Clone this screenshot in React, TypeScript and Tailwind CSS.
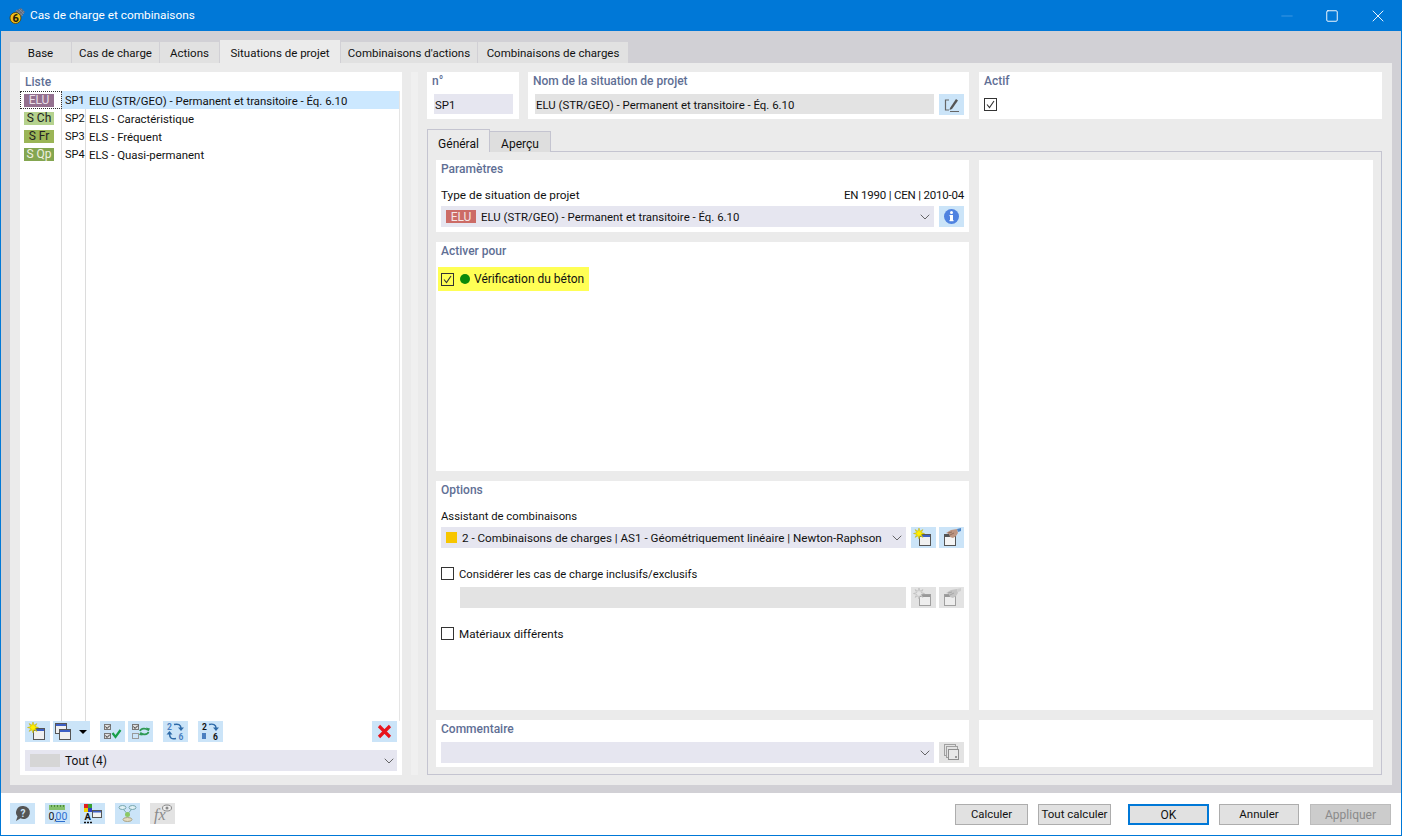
import React from 'react';
import { ChevronDown, Minus, Square, X } from 'lucide-react';

const font = { fontFamily: 'Roboto, "Noto Sans", sans-serif' };

const tabs = [
  { label: 'Base', w: 'w-[61px]' },
  { label: 'Cas de charge', w: 'w-[87px]' },
  { label: 'Actions', w: 'w-[59px]' },
  { label: 'Situations de projet', w: 'w-[120px]', active: true },
  { label: "Combinaisons d'actions", w: 'w-[136px]' },
  { label: 'Combinaisons de charges', w: 'w-[150px]' },
];

const rows = [
  { badge: 'ELU', color: 'bg-[#94708f] text-[#e8dfe8]', id: 'SP1', name: 'ELU (STR/GEO) - Permanent et transitoire - Éq. 6.10', selected: true },
  { badge: 'S Ch', color: 'bg-[#b5d28e] text-[#222]', id: 'SP2', name: 'ELS - Caractéristique' },
  { badge: 'S Fr', color: 'bg-[#9bb556] text-[#222]', id: 'SP3', name: 'ELS - Fréquent' },
  { badge: 'S Qp', color: 'bg-[#84a650] text-[#f0f0e0]', id: 'SP4', name: 'ELS - Quasi-permanent' },
];

const Star = ({ cx, cy, fill, stroke }: { cx: number; cy: number; fill: string; stroke: string }) => {
  const pts: string[] = [];
  for (let i = 0; i < 16; i++) {
    const r = i % 2 === 0 ? 5.5 : 2.4;
    const a = (Math.PI * 2 * i) / 16 - Math.PI / 2;
    pts.push(`${cx + r * Math.cos(a)},${cy + r * Math.sin(a)}`);
  }
  return <polygon points={pts.join(' ')} fill={fill} stroke={stroke} strokeWidth="0.5" />;
};

const NewIcon = ({ off }: { off?: boolean }) => (
  <svg width="25" height="21" viewBox="0 0 25 21">
    <rect x="8.5" y="7.5" width="11" height="11" fill={off ? '#eee' : '#f0f0f0'} stroke={off ? '#a0a0a0' : '#555'} />
    <rect x="9" y="8" width="10" height="2" fill={off ? '#999' : '#3d5fc4'} />
    <Star cx={8} cy={6.5} fill={off ? '#e4e4e4' : '#ffee00'} stroke={off ? '#aaa' : '#b8a800'} />
  </svg>
);

const HandIcon = ({ off }: { off?: boolean }) => (
  <svg width="25" height="21" viewBox="0 0 25 21">
    <rect x="5.5" y="7.5" width="11" height="11" fill={off ? '#eee' : '#f5f5f5'} stroke={off ? '#a0a0a0' : '#555'} />
    <rect x="6" y="8" width="10" height="2" fill={off ? '#999' : '#555'} />
    <path d="M7 6l5-3 6-1 1 4-2 3-3 2-3-1-1-3z" fill={off ? '#c4c4c4' : '#bd9683'} />
    <path d="M9 6l4-1M11 8l4-2" stroke={off ? '#999' : '#7d5c4c'} strokeWidth="0.700" />
    <path d="M18 2l4-1v3l-3 1z" fill={off ? '#d0d0d0' : '#4f86c6'} />
  </svg>
);

const CopyIcon = () => (
  <svg width="18" height="21" viewBox="0 0 18 21">
    <rect x="2.500" y="2.500" width="11" height="10" fill="#f0f0f0" stroke="#555" />
    <rect x="3" y="3" width="10" height="2" fill="#3d5fc4" />
    <rect x="6.500" y="8.500" width="11" height="10" fill="#f0f0f0" stroke="#555" />
    <rect x="7" y="9" width="10" height="2" fill="#3d5fc4" />
  </svg>
);

const CheckAllIcon = () => (
  <svg width="25" height="21" viewBox="0 0 25 21">
    <rect x="4.500" y="3.500" width="6" height="5" fill="#ddd" stroke="#777" />
    <rect x="4.500" y="12.500" width="6" height="5" fill="#ddd" stroke="#777" />
    <path d="M5.500 5.500l1.500 2 3-3M5.500 14.500l1.500 2 3-3" fill="none" stroke="#333" />
    <path d="M12.500 12l3 4 5-7" fill="none" stroke="#18a04a" strokeWidth="2.200" />
  </svg>
);

const CheckSwapIcon = () => (
  <svg width="25" height="21" viewBox="0 0 25 21">
    <rect x="4.500" y="3.500" width="6" height="5" fill="#ddd" stroke="#777" />
    <rect x="4.500" y="12.500" width="6" height="5" fill="none" stroke="#999" />
    <path d="M5.500 5.500l1.500 2 3-3" fill="none" stroke="#333" />
    <path d="M12 10c1-3 6-3 8-1M20.500 11c-1 3-6 3-8 1" fill="none" stroke="#2f9a55" strokeWidth="1.800" />
    <path d="M18 6.500l4 1-1.500 3zM14.500 14.500l-3.500-.5 1.500-3z" fill="#2f9a55" />
  </svg>
);

const RenumberIcon = () => (
  <svg width="25" height="21" viewBox="0 0 25 21" style={font}>
    <text x="4" y="9" fontSize="8.500" fontWeight="700" fill="#4a7fc0">2</text>
    <text x="15.500" y="18.500" fontSize="8.500" fontWeight="700" fill="#4a7fc0">6</text>
    <path d="M11 3.500c4-1 7 0 7 4" fill="none" stroke="#2e6aa8" strokeWidth="1.500" />
    <path d="M15 6.500h6l-3 3.500z" fill="#2e6aa8" />
    <path d="M13 17.500c-4 1-6.500 0-6.500-5" fill="none" stroke="#2e6aa8" strokeWidth="1.500" />
    <path d="M3.500 13.500h6l-3-3.500z" fill="#2e6aa8" />
  </svg>
);

const ShiftIcon = () => (
  <svg width="25" height="21" viewBox="0 0 25 21" style={font}>
    <text x="4" y="9" fontSize="8.500" fontWeight="700" fill="#111">2</text>
    <text x="15" y="18.500" fontSize="8.500" fontWeight="700" fill="#111">6</text>
    <path d="M11 3.500c4-1 7 0 7 3.500" fill="none" stroke="#2e6aa8" strokeWidth="1.500" />
    <path d="M15 6.500h6l-3 3.500z" fill="#2e6aa8" />
    <rect x="4" y="12" width="4" height="6" fill="#4a7fc0" />
  </svg>
);

const DeleteIcon = () => (
  <svg width="25" height="21" viewBox="0 0 25 21">
    <path d="M7 5l11 11M18 5L7 16" stroke="#e8141c" strokeWidth="3.200" />
  </svg>
);

const EditIcon = () => (
  <svg width="25" height="21" viewBox="0 0 25 21">
    <path d="M10 6H6.500v10H10" fill="none" stroke="#666" strokeWidth="1.200" />
    <path d="M11 14l6-9 2 1.500-6 8.500-2.500 1z" fill="#555" />
    <path d="M11 17.500h9" stroke="#666" />
  </svg>
);

const InfoIcon = () => (
  <svg width="25" height="21" viewBox="0 0 25 21">
    <circle cx="12.500" cy="10.500" r="7.500" fill="#4f82e0" />
    <rect x="11" y="9" width="3" height="6" fill="#fff" />
    <rect x="10.500" y="9" width="3" height="1.200" fill="#fff" />
    <rect x="10.500" y="14" width="4" height="1.200" fill="#fff" />
    <circle cx="12.500" cy="6.500" r="1.500" fill="#fff" />
  </svg>
);

const CommentIcon = () => (
  <svg width="25" height="21" viewBox="0 0 25 21">
    <rect x="5.500" y="2.500" width="11" height="11" fill="none" stroke="#a0a0a0" />
    <rect x="7.500" y="4.500" width="11" height="11" fill="#e2e2e2" stroke="#a0a0a0" />
    <rect x="9.500" y="7.500" width="10" height="10" fill="#e8e8e8" stroke="#8f8f8f" />
    <rect x="16" y="14" width="2" height="2" fill="#999" />
  </svg>
);

const HelpIcon = () => (
  <svg width="25" height="21" viewBox="0 0 25 21" style={font}>
    <path d="M13.500 3a6.500 6.500 0 1 1-3 12.300L6 18l1.500-4.500A6.500 6.500 0 0 1 13.500 3z" fill="#555" />
    <text x="10.500" y="13.500" fontSize="10" fontWeight="700" fill="#cfe6fa">?</text>
  </svg>
);

const RulerIcon = () => (
  <svg width="25" height="21" viewBox="0 0 25 21" style={font}>
    <rect x="4" y="2" width="16" height="5" fill="#84c06c" />
    <path d="M6.500 2v2M9.500 2v2M12.500 2v2M15.500 2v2M18.500 2v2" stroke="#4c8a40" />
    <text x="3.500" y="17" fontSize="10.500" fill="#111">0,</text>
    <text x="10.500" y="17" fontSize="10.500" fill="#2d6fd0">00</text>
    <path d="M11 18.500h9" stroke="#2d6fd0" />
  </svg>
);

const ColorIcon = () => (
  <svg width="25" height="21" viewBox="0 0 25 21" style={font}>
    <rect x="4" y="1" width="4" height="4" fill="#e02020" />
    <rect x="8" y="1" width="4" height="4" fill="#38a030" />
    <rect x="4" y="5" width="4" height="4" fill="#f0d000" />
    <rect x="8" y="5" width="4" height="4" fill="#3040c0" />
    <text x="4.500" y="17" fontSize="9.500" fontWeight="700" fill="#111">A</text>
    <path d="M4 19.500h2M7 19.500h2M10 19.500h2" stroke="#111" strokeWidth="1.500" />
    <rect x="12.500" y="7.500" width="9" height="7" fill="#f2f2f2" stroke="#555" />
    <rect x="13" y="8" width="8" height="1.500" fill="#3d5fc4" />
  </svg>
);

const TreeIcon = () => (
  <svg width="25" height="21" viewBox="0 0 25 21">
    <ellipse cx="7.500" cy="4.500" rx="3.500" ry="2" fill="#dff0f4" stroke="#7aa8b0" />
    <ellipse cx="17.500" cy="4.500" rx="3.500" ry="2" fill="#dff0f4" stroke="#7aa8b0" />
    <path d="M8.500 6.500l3.500 4M16.500 6.500l-3.500 4" stroke="#7aa8b0" />
    <circle cx="12.500" cy="11.500" r="2.500" fill="#8cc864" />
    <ellipse cx="12.500" cy="16.500" rx="4.500" ry="2" fill="#e4dcc0" stroke="#aaa488" />
  </svg>
);

const FormulaIcon = () => (
  <svg width="25" height="21" viewBox="0 0 25 21">
    <text x="4" y="17" fontSize="16" fontStyle="italic" fill="#8a8a8a" style={{ fontFamily: '"Liberation Serif", serif' }}>fx</text>
    <ellipse cx="17" cy="5" rx="4.500" ry="3" fill="#eee" stroke="#8a8a8a" />
    <circle cx="17" cy="5" r="1.500" fill="#8a8a8a" />
  </svg>
);

const AppIcon = () => (
  <svg width="18" height="18" viewBox="0 0 18 18" style={font}>
    <path d="M6 4l6-3 4 4-4 5z" fill="#5c6b80" />
    <path d="M7 3l7 6M10 2l5 5M13 2l-5 6M15 4l-4 5" stroke="#8a99ad" strokeWidth="0.600" />
    <circle cx="6.500" cy="11" r="5.500" fill="#f2c21a" stroke="#4a3a08" strokeWidth="0.800" />
    <text x="3.600" y="15" fontSize="11" fontWeight="800" fill="#2a2208">6</text>
  </svg>
);

const Check = () => (
  <svg width="13" height="13" viewBox="0 0 13 13" className="block shrink-0">
    <rect x="0.500" y="0.500" width="12" height="12" fill="none" stroke="#333" />
    <path d="M3 6.500l2.500 3L10 3" fill="none" stroke="#333" strokeWidth="1.100" />
  </svg>
);

const Unchecked = () => <span className="block w-[13px] h-[13px] border border-[#333] bg-white" />;

const ToolButton = ({ children, off, w = 'w-[25px]' }: { children: React.ReactNode; off?: boolean; w?: string }) => (
  <div className={`${w} h-[21px] flex items-center shrink-0 ${off ? 'bg-[#e3e3e3]' : 'bg-[#cbe4f8]'}`}>{children}</div>
);

const Caret = () => <ChevronDown className="w-[16px] h-[16px] text-[#444] shrink-0" strokeWidth={1.200} />;

const Card = ({ title, className, tall, children }: { title?: string; className: string; tall?: boolean; children?: React.ReactNode }) => (
  <section className={`bg-white px-[5px] ${className}`}>
    {title && <h3 className={`${tall ? 'h-[22px]' : 'h-[19px]'} text-[12px] leading-[18px] font-medium text-[#5f6f95]`}>{title}</h3>}
    {children}
  </section>
);

const FooterButton = ({ label, w, primary, disabled, size = 'text-[12px]' }: { label: string; w: string; primary?: boolean; disabled?: boolean; size?: string }) => (
  <button
    className={`${w} ${size} h-[21px] leading-none whitespace-nowrap ${
      primary
        ? 'border-2 border-[#0078d7] bg-[#e1e1e1] text-[#111]'
        : disabled
          ? 'border border-[#bcbcbc] bg-[#cccccc] text-[#8a8a8a]'
          : 'border border-[#adadad] bg-[#e1e1e1] text-[#111]'
    }`}
  >
    {label}
  </button>
);

export default function App() {
  return (
    <div className="w-[1402px] h-[836px] flex flex-col bg-white border-x border-b border-[#0078d7] text-[12px] text-[#111] overflow-hidden" style={font}>
      {/* Title bar */}
      <header className="h-[31px] shrink-0 bg-[#0078d7] flex items-center pl-[8px] text-white">
        <AppIcon />
        <span className="ml-[3px] text-[11.800px]">Cas de charge et combinaisons</span>
        <div className="ml-auto flex items-center">
          <Minus className="w-[18px] h-[18px] text-[#4da0e6] mr-[29px]" strokeWidth={1} />
          <Square className="w-[14px] h-[14px] mr-[29px]" strokeWidth={1.600} />
          <X className="w-[20px] h-[20px] mr-[13px]" strokeWidth={1.100} />
        </div>
      </header>

      {/* Body */}
      <div className="flex-1 bg-[#d1d0d5] pt-[9px] pl-[9px] pr-[9px] pb-[8px] flex flex-col min-h-0">
        <nav className="h-[23px] flex gap-[1px] shrink-0">
          {tabs.map(t => (
            <div
              key={t.label}
              className={`${t.w} flex items-center justify-center text-[11.500px] whitespace-nowrap ${t.active ? 'bg-[#ebebeb] pt-[5px]' : 'bg-[#e1e1e1] mt-[2px] pt-[3px]'}`}
            >
              {t.label}
            </div>
          ))}
        </nav>

        <div className="flex-1 bg-[#ebebeb] flex pt-[9px] pb-[10px] pl-[10px] pr-[10px] min-h-0">
          {/* List */}
          <aside className="w-[382px] bg-white flex flex-col shrink-0">
            <h3 className="h-[19px] pl-[5px] pt-[1px] text-[12px] leading-[18px] font-medium text-[#5f6f95]">Liste</h3>
            <div className="flex-1 flex relative mr-[2px] border-r border-[#e5e5e5]">
              <div className="w-[42px] border-r border-[#dcdcdc] shrink-0" />
              <div className="w-[24px] border-r border-[#dcdcdc] shrink-0" />
              <ul className="absolute inset-x-0 top-0">
                {rows.map(r => (
                  <li key={r.id} className="h-[18px] flex items-center relative">
                    <div className={`w-[42px] h-[18px] flex items-center pl-[4px] shrink-0 ${r.selected ? 'outline-1 outline-dotted outline-offset-[-1px] outline-[#333]' : ''}`}>
                      <span className={`w-[30px] h-[13px] flex items-center justify-center text-[12px] leading-none ${r.color}`}>{r.badge}</span>
                    </div>
                    <div className={`flex-1 h-[18px] flex items-center pt-[3px] text-[11.400px] ${r.selected ? 'bg-[#cce8ff]' : ''}`}>
                      <span className="w-[24px] pl-[3px] shrink-0 text-[11px]">{r.id}</span>
                      <span className="pl-[3px]">{r.name}</span>
                    </div>
                  </li>
                ))}
              </ul>
            </div>
            <div className="px-[5px] pb-[4px]">
              <div className="flex items-center h-[21px]">
                <ToolButton><NewIcon /></ToolButton>
                <div className="w-[37px] h-[21px] ml-[3px] bg-[#cbe4f8] flex items-center">
                  <CopyIcon />
                  <span className="ml-[8px] w-0 h-0 border-x-[4px] border-x-transparent border-t-[4px] border-t-black" />
                </div>
                <div className="ml-[10px]"><ToolButton><CheckAllIcon /></ToolButton></div>
                <div className="ml-[3px]"><ToolButton><CheckSwapIcon /></ToolButton></div>
                <div className="ml-[10px]"><ToolButton><RenumberIcon /></ToolButton></div>
                <div className="ml-[10px]"><ToolButton><ShiftIcon /></ToolButton></div>
                <div className="ml-auto"><ToolButton><DeleteIcon /></ToolButton></div>
              </div>
              <div className="mt-[8px] h-[21px] bg-[#e6e6f0] flex items-center pl-[5px] pr-[0px]">
                <span className="w-[30px] h-[13px] bg-[#d6d6d6]" />
                <span className="ml-[5px]">Tout (4)</span>
                <span className="ml-auto"><Caret /></span>
              </div>
            </div>
          </aside>

          {/* Splitter */}
          <div className="w-[25px] shrink-0 flex justify-center">
            <div className="w-[7px] bg-[#f0f0f0]" />
          </div>

          {/* Detail */}
          <main className="flex-1 flex flex-col min-w-0">
            <div className="flex h-[47px] shrink-0">
              <Card title="n°" tall className="w-[92px]">
                <div className="h-[20px] ml-[2px] w-[79px] bg-[#e6e6f0] flex items-center pl-[1px] pt-[3px] text-[11.400px]">SP1</div>
              </Card>
              <Card title="Nom de la situation de projet" tall className="w-[441px] ml-[9px]">
                <div className="flex gap-[5px] pl-[2px]">
                  <div className="flex-1 h-[20px] bg-[#e3e3e3] flex items-center pl-[1px] pt-[3px] text-[11.400px]">ELU (STR/GEO) - Permanent et transitoire - Éq. 6.10</div>
                  <ToolButton><EditIcon /></ToolButton>
                </div>
              </Card>
              <Card title="Actif" tall className="flex-1 ml-[10px]">
                <div className="pt-[4px]"><Check /></div>
              </Card>
            </div>

            <div className="flex h-[23px] mt-[10px] shrink-0 relative z-10">
              <div className="w-[63px] h-[23px] bg-[#ebebeb] border-x border-t border-[#c4c4d0] flex items-center justify-center pt-[5px]">Général</div>
              <div className="w-[61px] h-[21px] mt-[2px] bg-[#dedede] border-r border-t border-[#c4c4d0] flex items-center justify-center pt-[3px]">Aperçu</div>
            </div>

            <div className="flex-1 border border-[#c4c4d0] -mt-[1px] pt-[8px] pl-[8px] pr-[8px] pb-[7px] flex gap-[10px] min-h-0">
              <div className="w-[533px] flex flex-col gap-[10px] shrink-0">
                <Card title="Paramètres" className="h-[72px]">
                  <div className="flex justify-between items-start pt-[8px] h-[27px]">
                    <span className="text-[11.800px]">Type de situation de projet</span>
                    <span className="text-[11.500px] tracking-[-0.2px]">EN 1990 | CEN | 2010-04</span>
                  </div>
                  <div className="flex gap-[5px]">
                    <div className="flex-1 h-[21px] bg-[#e6e6f0] flex items-center pl-[5px] pr-[1px] text-[11.400px]">
                      <span className="w-[30px] h-[13px] bg-[#cc6b66] text-[#f5e6e6] text-[12px] flex items-center justify-center">ELU</span>
                      <span className="ml-[5px] pt-[2px]">ELU (STR/GEO) - Permanent et transitoire - Éq. 6.10</span>
                      <span className="ml-auto"><Caret /></span>
                    </div>
                    <ToolButton><InfoIcon /></ToolButton>
                  </div>
                </Card>

                <Card title="Activer pour" className="h-[229px]">
                  <div className="mt-[6px] -ml-[3px] w-[151px] h-[24px] bg-[#ffff55] flex items-center pl-[3px]">
                    <Check />
                    <span className="ml-[6px] w-[10px] h-[10px] rounded-full bg-[#0a8a0a]" />
                    <span className="ml-[4px]">Vérification du béton</span>
                  </div>
                </Card>

                <Card title="Options" className="h-[229px]">
                  <p className="pt-[9px] h-[27px] text-[11.300px]">Assistant de combinaisons</p>
                  <div className="flex">
                    <div className="w-[465px] h-[21px] bg-[#e6e6f0] flex items-center pl-[5px] pr-[1px] text-[11.650px]">
                      <span className="w-[11px] h-[11px] bg-[#f7c600] shrink-0" />
                      <span className="ml-[5px] pt-[2px] whitespace-nowrap">2 - Combinaisons de charges | AS1 - Géométriquement linéaire | Newton-Raphson</span>
                      <span className="ml-auto"><Caret /></span>
                    </div>
                    <div className="ml-[5px]"><ToolButton><NewIcon /></ToolButton></div>
                    <div className="ml-[3px]"><ToolButton><HandIcon /></ToolButton></div>
                  </div>
                  <label className="flex items-center mt-[19px] h-[13px] text-[11.250px]">
                    <Unchecked />
                    <span className="ml-[5px] pt-[3px]">Considérer les cas de charge inclusifs/exclusifs</span>
                  </label>
                  <div className="flex mt-[7px] pl-[19px]">
                    <div className="w-[446px] h-[21px] bg-[#e3e3e3]" />
                    <div className="ml-[5px]"><ToolButton off><NewIcon off /></ToolButton></div>
                    <div className="ml-[3px]"><ToolButton off><HandIcon off /></ToolButton></div>
                  </div>
                  <label className="flex items-center mt-[19px] h-[13px] text-[11.650px]">
                    <Unchecked />
                    <span className="ml-[5px] pt-[2px]">Matériaux différents</span>
                  </label>
                </Card>

                <Card title="Commentaire" className="h-[47px]">
                  <div className="flex gap-[5px] pt-[3px]">
                    <div className="flex-1 h-[21px] bg-[#e6e6f0] flex items-center justify-end pr-[1px]"><Caret /></div>
                    <ToolButton off><CommentIcon /></ToolButton>
                  </div>
                </Card>
              </div>

              <div className="flex-1 flex flex-col gap-[10px]">
                <div className="h-[550px] bg-white" />
                <div className="h-[47px] bg-white" />
              </div>
            </div>
          </main>
        </div>
      </div>

      {/* Footer */}
      <footer className="h-[42px] shrink-0 flex items-start pt-[10px] pl-[9px] pr-[10px]">
        <div className="flex gap-[10px]">
          <ToolButton><HelpIcon /></ToolButton>
          <ToolButton><RulerIcon /></ToolButton>
          <ToolButton><ColorIcon /></ToolButton>
          <ToolButton><TreeIcon /></ToolButton>
          <ToolButton off><FormulaIcon /></ToolButton>
        </div>
        <div className="ml-auto flex items-center mt-[1px]">
          <FooterButton label="Calculer" w="w-[73px]" size="text-[11.300px]" />
          <div className="ml-[10px]"><FooterButton label="Tout calculer" w="w-[73px]" size="text-[11.500px]" /></div>
          <div className="ml-[17px]"><FooterButton label="OK" w="w-[81px]" primary /></div>
          <div className="ml-[10px]"><FooterButton label="Annuler" w="w-[80px]" size="text-[11.500px]" /></div>
          <div className="ml-[11px]"><FooterButton label="Appliquer" w="w-[81px]" disabled /></div>
        </div>
      </footer>
    </div>
  );
}
